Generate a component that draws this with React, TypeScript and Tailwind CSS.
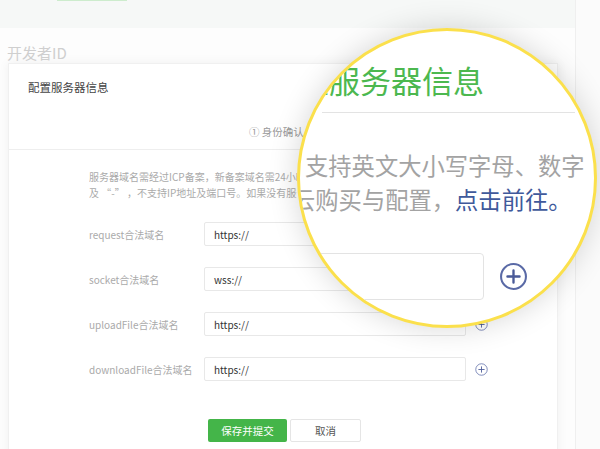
import React from "react"

const rows = [
  { label: "request合法域名", value: "https://" },
  { label: "socket合法域名", value: "wss://" },
  { label: "uploadFile合法域名", value: "https://" },
  { label: "downloadFile合法域名", value: "https://" },
]

function PlusCircle({ size, stroke }: { size: number; stroke: number }) {
  return (
    <svg width={size} height={size} viewBox="0 0 24 24" fill="none" className="shrink-0">
      <circle cx="12" cy="12" r={12 - stroke} stroke="#5a6aa6" strokeWidth={stroke} />
      <path d="M12 7v10M7 12h10" stroke="#4a5a98" strokeWidth={stroke * 1.15} strokeLinecap="round" />
    </svg>
  )
}

export default function App() {
  return (
    <div className="relative h-[449px] w-[600px] overflow-hidden bg-[#fbfbfb] font-['Noto_Sans_CJK_SC','Liberation_Sans',sans-serif]">
      <div className="h-full w-[576px] border-r border-[#efefef] bg-[#fdfdfd]">
        {/* top nav strip */}
        <div className="h-[28px] bg-[#f6f8f7]">
          <div className="ml-[57px] h-px w-[70px] bg-[#cdeccd]" />
        </div>

        <div className="pl-[7px] pt-[15px] text-[15px] leading-[20px] text-[#cfcfcf]">开发者ID</div>

        {/* dialog */}
        <div className="ml-[8px] h-[400px] w-[550px] border border-[#f0f0f0] bg-white shadow-[0_0_10px_rgba(0,0,0,0.06)]">
          <div className="border-b border-[#eeeeee] px-[19px] pb-[10px] pt-[16px]">
            <div className="text-[11.5px] leading-[14px] text-[#444]">配置服务器信息</div>
            <div className="mt-[31px] pl-[221px] text-[10.5px] leading-[14px] text-[#999]">① 身份确认</div>
          </div>

          <div className="pl-[80px] pt-[19px]">
            <div className="w-[208px] overflow-hidden whitespace-nowrap text-[10px] leading-[16px] text-[#aaa]">
              服务器域名需经过ICP备案，新备案域名需24小时
              <br />
              及 “-” ，不支持IP地址及端口号。如果没有服务
            </div>

            <div className="mt-[21px] flex flex-col gap-[21px]">
              {rows.map((r) => (
                <div key={r.label} className="flex items-center">
                  <div className="w-[115px] text-[10px] text-[#aaa]">{r.label}</div>
                  <div className="flex h-[24px] w-[262px] items-center rounded-[2px] border border-[#e8e8e8] pl-[9px] text-[10px] text-[#333]">
                    {r.value}
                  </div>
                  <div className="ml-[9px]">
                    <PlusCircle size={13} stroke={1.4} />
                  </div>
                </div>
              ))}
            </div>

            <div className="mt-[38px] flex gap-[3px] pl-[119px]">
              <button className="h-[23px] w-[79px] rounded-[2px] bg-[#44b549] text-[10.5px] text-white">保存并提交</button>
              <button className="h-[23px] w-[71px] rounded-[2px] border border-[#e5e5e5] bg-white text-[10.5px] text-[#555]">取消</button>
            </div>
          </div>
        </div>
      </div>

      {/* magnifier */}
      <div className="absolute left-[297px] top-[28px] h-[300px] w-[300px] overflow-hidden rounded-full border-[3px] border-[#fbe04c] bg-white shadow-[0_0_30px_rgba(0,0,0,0.16)]">
        <div className="ml-[-33px] mt-[31px] whitespace-nowrap text-[31px] leading-[36px] text-[#4cb84f]">配置服务器信息</div>
        <div className="ml-[22px] mt-[14px] h-px w-[253px] bg-[#e3e3e3]" />
        <div className="ml-[5px] mt-[35px] whitespace-nowrap text-[23.3px] leading-[34px] text-[#a3a3a3]">支持英文大小写字母、数字</div>
        <div className="ml-[-8px] whitespace-nowrap text-[23.3px] leading-[34px] text-[#a3a3a3]">
          云购买与配置，<span className="text-[#40599b]">点击前往。</span>
        </div>
        <div className="mt-[37px] flex items-center">
          <div className="ml-[-50px] h-[47px] w-[234px] shrink-0 rounded-[4px] border border-[#e3e3e3]" />
          <div className="ml-[15px]">
            <PlusCircle size={29} stroke={1.7} />
          </div>
        </div>
      </div>
    </div>
  )
}
